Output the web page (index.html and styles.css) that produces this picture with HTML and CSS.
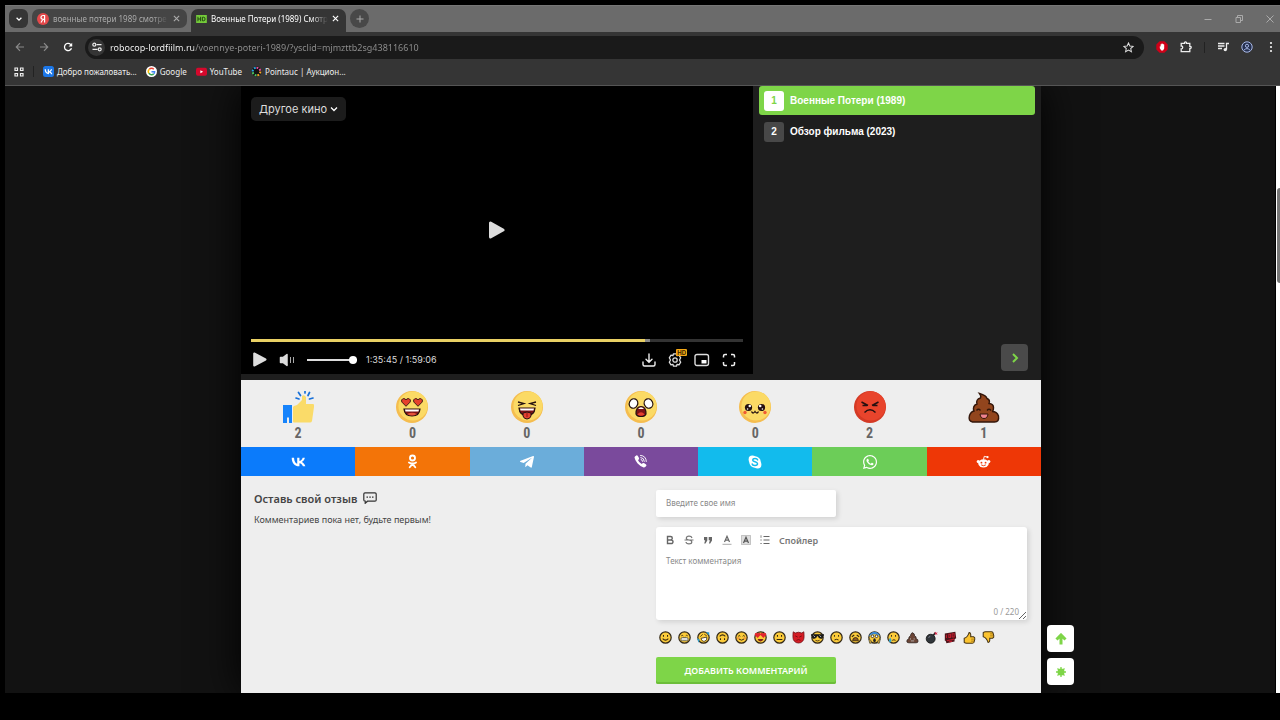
FILE: index.html
```html
<!DOCTYPE html>
<html lang="ru">
  <head>
    <meta charset="UTF-8" />
    <meta name="viewport" content="width=device-width, initial-scale=1.0" />
    <title>Военные Потери (1989) Смотреть</title>
    <link rel="stylesheet" href="styles.css">
  </head>
  <body>
    <svg class="sprite" aria-hidden="true">
      <symbol id="face" viewBox="0 0 32 32">
        <circle cx="16" cy="16" r="16" fill="#f5bd4f"/>
        <circle cx="17" cy="15" r="14.6" fill="#fbda65"/>
      </symbol>
      <symbol id="heart" viewBox="0 0 10 9">
        <path d="M5 8.3L1 4.2C-.2 2.6 1 .6 2.8.6 4 .6 4.700 1.300 5 2 5.300 1.300 6 .6 7.200.6 9 .6 10.200 2.600 9 4.200z" fill="#e6402c" stroke="#2a1512" stroke-width=".9"/>
      </symbol>
      <symbol id="mini" viewBox="0 0 16 16">
        <circle cx="8" cy="8" r="7" fill="#fbcb3a" stroke="#33291a" stroke-width="1.500"/>
      </symbol>
    </svg>

    <div class="browser">
      <div class="tabs">
        <button class="tab-search" aria-label="Поиск вкладок">
          <svg viewBox="0 0 10 10" width="8" height="8"><path d="M2 3.500l3 3 3-3" fill="none" stroke="#fff" stroke-width="1.600"/></svg>
        </button>
        <div class="tab">
          <svg viewBox="0 0 12 12" width="12" height="12"><circle cx="6" cy="6" r="6" fill="#e5484a"/><path d="M7.600 9.500v-7H6.300C4.800 2.500 4 3.300 4 4.500S4.700 6.300 6.300 6.300h1.300M6 6.300L4 9.500" fill="none" stroke="#fff" stroke-width="1.200"/></svg>
          <span class="tab-title">военные потери 1989 смотре</span>
          <button class="tab-close" aria-label="Закрыть"><svg viewBox="0 0 8 8" width="7" height="7"><path d="M1 1l6 6M7 1L1 7" stroke="currentColor" stroke-width="1.300"/></svg></button>
        </div>
        <div class="tab tab-active">
          <svg viewBox="0 0 12 9" width="11" height="8"><rect width="12" height="9" fill="#74cb3a"/><path d="M2 2v5M2 4.500h3M5 2v5M7 2.500v4h1.500q1.500 0 1.500-2t-1.500-2z" fill="none" stroke="#193b0b"/></svg>
          <span class="tab-title">Военные Потери (1989) Смотр</span>
          <button class="tab-close" aria-label="Закрыть"><svg viewBox="0 0 8 8" width="7" height="7"><path d="M1 1l6 6M7 1L1 7" stroke="currentColor" stroke-width="1.300"/></svg></button>
        </div>
        <button class="tab-new" aria-label="Новая вкладка">
          <svg viewBox="0 0 8 8" width="8" height="8"><path d="M4 .5v7M.5 4h7" stroke="#aaa"/></svg>
        </button>
        <div class="window-buttons">
          <button aria-label="Свернуть"><svg viewBox="0 0 8 8" width="8" height="8"><path d="M.5 4.500h7" stroke="#aaa"/></svg></button>
          <button aria-label="Развернуть"><svg viewBox="0 0 8 8" width="8" height="8"><path d="M1 2.500h4.500v5H1zM2.500 2.500v-2h5v5h-2" fill="none" stroke="#aaa"/></svg></button>
          <button aria-label="Закрыть окно"><svg viewBox="0 0 8 8" width="8" height="8"><path d="M.5.5l7 7M7.500.5l-7 7" stroke="#aaa"/></svg></button>
        </div>
      </div>

      <div class="toolbar">
        <div class="history">
          <button aria-label="Назад"><svg viewBox="0 0 10 10" width="10" height="10"><path d="M9 5H1.500M5 1.200L1.300 5 5 8.800" fill="none" stroke="#8a8a8a" stroke-width="1.200"/></svg></button>
          <button aria-label="Вперёд"><svg viewBox="0 0 10 10" width="10" height="10"><path d="M1 5h7.500M5 1.200L8.700 5 5 8.800" fill="none" stroke="#8a8a8a" stroke-width="1.200"/></svg></button>
          <button aria-label="Обновить"><svg viewBox="0 0 10 10" width="10" height="10"><path d="M8.500 6.200A3.600 3.600 0 1 1 7.600 2.400L8.800 3.600" fill="none" stroke="#fff" stroke-width="1.300"/><path d="M9.200.8v3.600H5.600z" fill="#fff"/></svg></button>
        </div>
        <div class="omnibox">
          <button class="site-info" aria-label="Сведения о сайте"><svg viewBox="0 0 10 10" width="10" height="10"><path d="M4.500 2.700h5M.5 7.300h5" stroke="#eee" stroke-width="1.200"/><circle cx="2.300" cy="2.700" r="1.500" fill="none" stroke="#eee" stroke-width="1.200"/><circle cx="7.700" cy="7.300" r="1.500" fill="none" stroke="#eee" stroke-width="1.200"/></svg></button>
          <input class="url" type="text" aria-label="Адресная строка" value="robocop-lordfiilm.ru/voennye-poteri-1989/?ysclid=mjmzttb2sg438116610">
          <button aria-label="В закладки"><svg viewBox="0 0 12 12" width="11" height="11"><path d="M6 1l1.500 3.300 3.600.4-2.700 2.400.8 3.500L6 8.800l-3.200 1.800.8-3.500L.9 4.700l3.600-.4z" fill="none" stroke="#ddd" stroke-width="1.100"/></svg></button>
        </div>
        <div class="extensions">
          <button aria-label="Блокировщик"><svg viewBox="0 0 12 12" width="12" height="12"><path d="M3.600.3h4.800l3.300 3.300v4.800l-3.300 3.300H3.600L.3 8.400V3.600z" fill="#d00018"/><path d="M3.800 5.200l.8.300V3.200h1V2.400h1v.5h.9V3.600h.7v3.900L7 9.500H5.300L3.800 7.200z" fill="#fff"/></svg></button>
          <button aria-label="Расширения"><svg viewBox="0 0 12 12" width="12" height="12"><path d="M1.200 2.400h3.300q-.2-1.500 1-1.500t1 1.500h3.300v3q1.400-.1 1.400 1t-1.400 1v3.200H1.200V7.900q1.500 0 1.500-1.500T1.200 5z" fill="none" stroke="#eee" stroke-width="1.300"/></svg></button>
          <i class="separator"></i>
          <button aria-label="Медиа"><svg viewBox="0 0 12 12" width="12" height="12"><path d="M1 2.500h6.500M1 5h6.500M1 7.500h4M9.500 8.500V2.500H12" fill="none" stroke="#eee" stroke-width="1.300"/><circle cx="8.300" cy="8.600" r="1.700" fill="#eee"/></svg></button>
          <button aria-label="Профиль"><svg viewBox="0 0 12 12" width="12" height="12"><circle cx="6" cy="6" r="5.200" fill="#263150" stroke="#a9b9e6"/><circle cx="6" cy="4.800" r="1.600" fill="none" stroke="#a9b9e6"/><path d="M2.800 9.300Q6 5.900 9.200 9.300" fill="none" stroke="#a9b9e6"/></svg></button>
          <button aria-label="Меню"><svg viewBox="0 0 12 12" width="12" height="12" fill="#eee"><circle cx="6" cy="2" r="1.100"/><circle cx="6" cy="6" r="1.100"/><circle cx="6" cy="10" r="1.100"/></svg></button>
        </div>
      </div>

      <nav class="bookmarks">
        <button aria-label="Сервисы"><svg viewBox="0 0 10 10" width="10" height="10"><path d="M1 1h2.500v2.500H1zM6.500 1H9v2.500H6.500zM1 6.500h2.500V9H1zM6.500 6.500H9V9H6.500z" fill="none" stroke="#eee" stroke-width="1.200"/></svg></button>
        <i class="separator"></i>
        <a href="#"><svg viewBox="0 0 22 22" width="11" height="11"><rect width="22" height="22" rx="5" fill="#1c77e8"/><path transform="translate(1.500 2.500) scale(.82)" d="M12.500 17C5.900 17 2.100 12.500 2 5h3.300c.1 5.500 2.500 7.800 4.400 8.300V5h3.100v4.700c1.900-.2 3.900-2.300 4.500-4.700h3.100c-.5 2.900-2.700 5-4.200 5.900 1.500.7 4 2.600 4.900 6.100h-3.400c-.7-2.300-2.600-4-4.900-4.300V17z" fill="#fff"/></svg>Добро пожаловать...</a>
        <a href="#"><svg viewBox="0 0 12 12" width="11" height="11"><circle cx="6" cy="6" r="6" fill="#fff"/><g fill="none" stroke-width="1.600"><path d="M3.600 3.500A3.400 3.400 0 0 1 8.500 3.500" stroke="#ea4335"/><path d="M3.100 7.800A3.400 3.400 0 0 1 3.600 3.500" stroke="#fbbc05"/><path d="M8.500 8.500A3.400 3.400 0 0 1 3.100 7.800" stroke="#34a853"/><path d="M6 6.200h3.400q0 1.500-.9 2.300" stroke="#4285f4"/></g></svg>Google</a>
        <a href="#"><svg viewBox="0 0 12 12" width="11" height="11"><rect y="2" width="12" height="8.500" rx="2" fill="#d5082c"/><path d="M4.800 4.500v3.500l3-1.750z" fill="#fff"/></svg>YouTube</a>
        <a href="#"><svg viewBox="0 0 12 12" width="11" height="11"><circle cx="6" cy="6" r="5.500" fill="#111"/><g fill="none" stroke-width="2.200" stroke-dasharray="2 1.500"><path d="M6 1.800A4.200 4.200 0 0 1 10.200 6" stroke="#e94f9d"/><path d="M10.200 6A4.200 4.200 0 0 1 6 10.200" stroke="#f5a524"/><path d="M6 10.200A4.200 4.200 0 0 1 1.800 6" stroke="#4cc763"/><path d="M1.800 6A4.200 4.200 0 0 1 6 1.800" stroke="#2ba9e8"/></g></svg>Pointauc | Аукцион...</a>
      </nav>

      <div class="viewport">
        <div class="scroller">
          <main class="site">
            <section class="player">
              <div class="video">
                <button class="other">Другое кино
                  <svg viewBox="0 0 8 8" width="8" height="8"><path d="M1 2.500l3 3 3-3" fill="none" stroke="#fff" stroke-width="1.300"/></svg>
                </button>
                <button class="big-play" aria-label="Смотреть"><svg viewBox="0 0 16 18" width="16" height="18"><path d="M1.500 2v14L14 9z" fill="#ddd" stroke="#ddd" stroke-width="3" stroke-linejoin="round"/></svg></button>
                <div class="controls">
                  <input class="seek" type="range" min="0" max="7146" value="5745" aria-label="Перемотка">
                  <div class="control-row">
                    <button aria-label="Играть"><svg viewBox="0 0 14 15" width="14" height="15"><path d="M1.200 1.500v12L12.500 7.500z" fill="#ddd" stroke="#ddd" stroke-width="2" stroke-linejoin="round"/></svg></button>
                    <button aria-label="Звук"><svg viewBox="0 0 16 14" width="16" height="14"><path d="M1.500 4.500H4L8 1.500v11L4 9.500H1.500z" fill="#ddd" stroke="#ddd" stroke-width="1.500" stroke-linejoin="round"/><path d="M11.500 4v6M14.500 4v6" stroke="#aaa"/></svg></button>
                    <input class="volume" type="range" min="0" max="100" value="100" aria-label="Громкость">
                    <span class="time">1:35:45 / 1:59:06</span>
                    <div class="control-right">
                      <button aria-label="Скачать"><svg viewBox="0 0 14 14" width="14" height="14" fill="none" stroke="#eee" stroke-width="1.400" stroke-linecap="round"><path d="M7 1v8M4 6.300l3 3 3-3M1 9v2.500q0 1.500 1.500 1.500h9q1.500 0 1.500-1.500V9"/></svg></button>
                      <button class="settings" aria-label="Настройки"><svg viewBox="0 0 14 14" width="14" height="14" fill="none" stroke="#ddd" stroke-width="1.300" stroke-linejoin="round"><path d="M5.500.8h3l.6 1.900 1.900-.5 1.700 2.600L11.500 7l1.200 2.200-1.700 2.600-1.900-.5-.6 1.900h-3l-.6-1.900-1.900.5-1.700-2.600L2.500 7 1.300 4.800 3 2.200l1.900.5z"/><circle cx="7" cy="7" r="2.200"/></svg><span class="hd">HD</span></button>
                      <button aria-label="Мини-плеер"><svg viewBox="0 0 16 14" width="16" height="14"><rect x="1" y="1.500" width="13.500" height="11" rx="2" fill="none" stroke="#ddd" stroke-width="1.400"/><rect x="7.500" y="7" width="5" height="3.500" fill="#fff"/></svg></button>
                      <button aria-label="Во весь экран"><svg viewBox="0 0 14 14" width="14" height="14"><path d="M1.500 4.500V3q0-1.500 1.500-1.500h2M9 1.500h2q1.500 0 1.500 1.500v1.500M12.500 9v2q0 1.500-1.500 1.500H9M5 12.500H3Q1.500 12.500 1.500 11V9" fill="none" stroke="#eee" stroke-width="1.500"/></svg></button>
                    </div>
                  </div>
                </div>
              </div>
              <aside class="playlist">
                <button class="episode episode-active"><b>1</b>Военные Потери (1989)</button>
                <button class="episode"><b>2</b>Обзор фильма (2023)</button>
                <button class="next" aria-label="Далее"><svg viewBox="0 0 10 12" width="10" height="12"><path d="M3 2l4 4-4 4" fill="none" stroke="#7ed548" stroke-width="2"/></svg></button>
              </aside>
            </section>

            <section class="reactions">
              <button class="reaction">
                <svg viewBox="0 0 32 32" width="32" height="32"><path d="M1 14h9v18H7v-5l-1-1-1 1v5H1z" fill="#1683fb"/><path d="M12 15l3-1 5-5V5q2-2 4 1v7h7q1.500 0 1 3l-2 14q-.5 1.500-2 1.500H12q-1 0-1-1V16z" fill="#fadb69"/><path d="M14 7l3 1M16.500 1.500l2 3M23 0v2M27.500 1.500l-1.500 3M31 7l-3.500 1" stroke="#1870d8" stroke-width="1.700" stroke-linecap="round"/></svg>
                <span>2</span>
              </button>
              <button class="reaction">
                <svg viewBox="0 0 32 32" width="32" height="32"><use href="#face"/><use href="#heart" x="5" y="7" width="10" height="9"/><use href="#heart" x="17" y="7" width="10" height="9"/><path d="M8 18h16q-.5 7-8 7t-8-7z" fill="#7c1216" stroke="#241010" stroke-width="1.200"/><path d="M9 18.600h14l-.5 2H9.500z" fill="#fff"/><path d="M11 23q5-2.500 10 0-5 3-10 0z" fill="#e5533b"/></svg>
                <span>0</span>
              </button>
              <button class="reaction">
                <svg viewBox="0 0 32 32" width="32" height="32"><use href="#face"/><path d="M7 11l6 1.500L7 14.500M25 11l-6 1.500 6 2" fill="none" stroke="#241010" stroke-width="1.300"/><path d="M8 17h16q-.5 7.500-8 7.500T8 17z" fill="#7c1216" stroke="#241010" stroke-width="1.200"/><path d="M9 17.600h14l-.5 2H9.500z" fill="#fff"/><path d="M12 22q4-2 8 0v3q-1 3-4 3t-4-3z" fill="#e5402f" stroke="#241010"/><path d="M16 22v4" stroke="#8c1717"/></svg>
                <span>0</span>
              </button>
              <button class="reaction">
                <svg viewBox="0 0 32 32" width="32" height="32"><use href="#face"/><ellipse cx="8.500" cy="12.500" rx="4.200" ry="4.800" transform="rotate(25 8.500 12.500)" fill="#fff" stroke="#241010" stroke-width="1.200"/><ellipse cx="23.500" cy="12.500" rx="4.200" ry="4.800" transform="rotate(-25 23.500 12.500)" fill="#fff" stroke="#241010" stroke-width="1.200"/><path d="M11 23q0-7.500 5-7.500t5 7.500q-1 2.500-5 2.500T11 23z" fill="#7c1216" stroke="#241010" stroke-width="1.200"/><path d="M13 18q3-3.500 6 0z" fill="#fff"/><path d="M12.300 23.500q3.700-4.500 7.400 0-3.700 2.500-7.400 0z" fill="#e5402f"/></svg>
                <span>0</span>
              </button>
              <button class="reaction">
                <svg viewBox="0 0 32 32" width="32" height="32"><use href="#face"/><circle cx="9.500" cy="16.500" r="3.600" fill="#241010"/><circle cx="22.500" cy="16.500" r="3.600" fill="#241010"/><circle cx="10.800" cy="15" r="1.300" fill="#fff"/><circle cx="21.200" cy="15" r="1.300" fill="#fff"/><circle cx="8.600" cy="18" r=".8" fill="#fff"/><circle cx="23.400" cy="18" r=".8" fill="#fff"/><circle cx="6" cy="21.500" r="1.700" fill="#ef5b34"/><circle cx="26" cy="21.500" r="1.700" fill="#ef5b34"/><path d="M12.500 20.500q1.500 3 3.500 0 2 3 3.500 0" fill="none" stroke="#241010" stroke-width="1.300"/></svg>
                <span>0</span>
              </button>
              <button class="reaction">
                <svg viewBox="0 0 32 32" width="32" height="32"><circle cx="16" cy="16" r="16" fill="#d43a25"/><circle cx="17" cy="15" r="14.600" fill="#e8442c"/><path d="M7.500 11l6.500 3.500M24.500 11L18 14.500M8.500 14.500h4.500M19 14.500h4.500M10.500 21.500q5.500-5.500 11 0" fill="none" stroke="#241010" stroke-width="1.500"/></svg>
                <span>2</span>
              </button>
              <button class="reaction">
                <svg viewBox="0 0 32 32" width="32" height="32"><path d="M11.500 2.500q7 2 7.500 5 3.500 1.500 2 5 4.500.5 4.500 4t-1.500 4q5 0 6.500 4.500 1 6-4 6h-22Q0 30 1.500 24.500 3 20.500 6 20q-2-5 3-7-1.500-4.500 3.500-6 1-2-1-4.500z" fill="#92451d" stroke="#33160a" stroke-width="1.400"/><path d="M8.500 19.500q2-2.500 4 0M19 19.500q2-2.500 4 0" fill="none" stroke="#33160a" stroke-width="1.300"/><path d="M12 23h8q-.5 4.500-4 4.500T12 23z" fill="#ee8390" stroke="#33160a"/></svg>
                <span>1</span>
              </button>
            </section>

            <section class="share">
              <a href="#" class="vk" aria-label="ВКонтакте"><svg viewBox="1 3 21 16" width="15" height="12"><path d="M12.500 17C5.900 17 2.100 12.500 2 5h3.300c.1 5.500 2.500 7.800 4.400 8.300V5h3.100v4.700c1.900-.2 3.900-2.300 4.500-4.700h3.100c-.5 2.900-2.700 5-4.200 5.900 1.500.7 4 2.600 4.900 6.100h-3.400c-.7-2.300-2.600-4-4.900-4.300V17z" fill="#fff"/></svg></a>
              <a href="#" class="ok" aria-label="Одноклассники"><svg viewBox="0 0 14 16" width="13" height="15" fill="none" stroke="#fff" stroke-width="2" stroke-linecap="round"><circle cx="7" cy="4.200" r="2.700"/><path d="M3.200 9q3.800 2.400 7.600 0M7 10.500l-3 3.700M7 10.500l3 3.700"/></svg></a>
              <a href="#" class="tg" aria-label="Telegram"><svg viewBox="0 0 448 512" width="14" height="16"><path d="M446.700 98.600l-67.600 318.800c-5.100 22.500-18.400 28.100-37.300 17.500l-103-75.900-49.700 47.800c-5.500 5.500-10.100 10.100-20.700 10.100l7.400-104.900 190.900-172.500c8.300-7.400-1.800-11.500-12.900-4.100L117.800 284 16.200 252.200c-22.100-6.900-22.500-22.100 4.600-32.700L418.200 66.400c18.400-6.900 34.500 4.100 28.500 32.200z" fill="#fff"/></svg></a>
              <a href="#" class="viber" aria-label="Viber"><svg viewBox="0 0 16 16" width="15" height="15"><path d="M3.500 1.500q1-.5 2 1.200T6.500 5Q6.500 5.800 5.300 6.500q1 3 4 4.200 1-1.400 2-1.200 1 .3 2.600 1.600.8.700.3 1.500-1.300 2-2.800 1.700Q7.500 13 4.700 9.800 2 6.500 1.600 3.800q0-1.300 1.900-2.300z" fill="#fff"/><path d="M8 1.500q6 .3 6.200 6.500M8.300 3.700q3.700.4 3.800 4.200M8.600 5.800q1.500.2 1.600 2" fill="none" stroke="#fff" stroke-linecap="round"/></svg></a>
              <a href="#" class="skype" aria-label="Skype"><svg viewBox="0 0 16 16" width="14" height="14"><circle cx="5" cy="5" r="4.300" fill="#fff"/><circle cx="11" cy="11" r="4.300" fill="#fff"/><circle cx="8" cy="8" r="6.600" fill="#fff"/><path d="M11 5.600Q10.500 4 8 4T5.300 5.800q0 1.500 2.700 2t2.900 2.200Q10.900 12 8 12t-3.200-1.800" fill="none" stroke="#12bbed" stroke-width="1.700" stroke-linecap="round"/></svg></a>
              <a href="#" class="wa" aria-label="WhatsApp"><svg viewBox="0 0 448 512" width="14" height="16"><path d="M380.900 97.100C339 55.100 283.200 32 223.900 32c-122.400 0-222 99.600-222 222 0 39.100 10.200 77.300 29.600 111L0 480l117.700-30.900c32.400 17.700 68.900 27 106.100 27h.1c122.300 0 224.100-99.600 224.100-222 0-59.300-25.200-115-67.100-157zm-157 341.600c-33.200 0-65.700-8.900-94-25.700l-6.700-4-69.800 18.300L72 359.200l-4.400-7c-18.500-29.400-28.200-63.300-28.200-98.200 0-101.700 82.800-184.500 184.600-184.500 49.300 0 95.600 19.200 130.400 54.100 34.800 34.900 56.200 81.200 56.100 130.500 0 101.800-84.900 184.600-186.600 184.600zm101.200-138.200c-5.500-2.800-32.800-16.200-37.900-18-5.100-1.900-8.800-2.800-12.500 2.800-3.700 5.600-14.300 18-17.600 21.800-3.200 3.700-6.500 4.200-12 1.400-32.600-16.300-54-29.100-75.500-66-5.700-9.800 5.700-9.100 16.300-30.300 1.800-3.700.9-6.900-.5-9.700-1.400-2.800-12.500-30.100-17.100-41.200-4.500-10.800-9.100-9.300-12.500-9.500-3.200-.2-6.900-.2-10.600-.2-3.700 0-9.700 1.400-14.800 6.900-5.100 5.600-19.400 19-19.400 46.300 0 27.300 19.900 53.700 22.600 57.400 2.800 3.700 39.100 59.700 94.800 83.800 35.200 15.200 49 16.500 66.600 13.900 10.700-1.600 32.800-13.400 37.400-26.400 4.600-13 4.600-24.100 3.200-26.400-1.300-2.500-5-3.900-10.500-6.600z" fill="#fff"/></svg></a>
              <a href="#" class="reddit" aria-label="Reddit"><svg viewBox="0 0 16 16" width="15" height="15"><ellipse cx="8" cy="10" rx="5.600" ry="4.300" fill="#fff"/><circle cx="2.300" cy="8" r="1.600" fill="#fff"/><circle cx="13.700" cy="8" r="1.600" fill="#fff"/><path d="M8 6l.8-3.500 3 .7" fill="none" stroke="#fff"/><circle cx="12.300" cy="3.200" r="1.200" fill="#fff"/><circle cx="5.800" cy="9.200" r="1" fill="#f03a0a"/><circle cx="10.200" cy="9.200" r="1" fill="#f03a0a"/><path d="M5.500 11.600q2.500 1.800 5 0" fill="none" stroke="#f03a0a"/></svg></a>
            </section>

            <section class="comments">
              <div>
                <h2>Оставь свой отзыв
                  <svg viewBox="0 0 14 12" width="14" height="12"><path d="M2 .8h10q1.200 0 1.200 1.200v6q0 1.200-1.200 1.200H4.500L2.200 11.300V9.200Q.8 9.200.8 8V2Q.8.8 2 .8z" fill="none" stroke="#333" stroke-width="1.200"/><path d="M3.500 4.500H5v1.200H3.500zM6.300 4.500h1.500v1.200H6.300zM9 4.500h1.500v1.200H9z" fill="#333"/></svg>
                </h2>
                <p>Комментариев пока нет, будьте первым!</p>
              </div>
              <form class="comment-form">
                <input class="name" type="text" placeholder="Введите свое имя" aria-label="Имя">
                <div class="editor">
                  <div class="format">
                    <button type="button" aria-label="Жирный"><svg viewBox="0 0 10 10" width="10" height="10"><path d="M2.500 1.500h3q1.800 0 1.800 1.700T5.500 5h-3zM2.500 5H6q2 0 2 1.800T6 8.500H2.500z" fill="none" stroke="#666" stroke-width="1.400"/></svg></button>
                    <button type="button" aria-label="Зачёркнутый"><svg viewBox="0 0 10 10" width="10" height="10"><path d="M8 3Q7.500 1.200 5 1.200T2.300 3.200Q2.300 4.600 5 5T7.800 7Q7.800 8.900 5 8.900T2 7M.5 5h9" fill="none" stroke="#777" stroke-width="1.200"/></svg></button>
                    <button type="button" aria-label="Цитата"><svg viewBox="0 0 10 10" width="10" height="10"><path d="M1 2h3.300v3.500L2.500 8.500H1.200L2.200 5.300H1zM5.700 2H9v3.500L7.200 8.500H5.900L6.900 5.300H5.700z" fill="#666"/></svg></button>
                    <button type="button" aria-label="Цвет текста"><svg viewBox="0 0 10 10" width="10" height="10"><path d="M2.500 7L5 1.300 7.500 7M3.400 5.200h3.200" fill="none" stroke="#666" stroke-width="1.200"/><path d="M.5 9.300h9" stroke="#aaa"/></svg></button>
                    <button type="button" aria-label="Цвет фона"><svg viewBox="0 0 10 10" width="10" height="10"><rect x=".5" y=".5" width="9" height="9" fill="#ddd" stroke="#999" stroke-dasharray="1 1"/><path d="M2.500 8L5 2.300 7.500 8M3.400 6.200h3.200" fill="none" stroke="#555" stroke-width="1.200"/></svg></button>
                    <button type="button" aria-label="Список"><svg viewBox="0 0 10 10" width="10" height="10"><path d="M3.500 1.500h6M3.500 5h6M3.500 8.500h6" stroke="#666" stroke-width="1.200"/><path d="M1 .3v2.500M.3 5h1.500M.3 8.500h1.500" stroke="#888"/></svg></button>
                    <button type="button" class="spoiler">Спойлер</button>
                  </div>
                  <textarea placeholder="Текст комментария" aria-label="Текст комментария" maxlength="220"></textarea>
                  <span class="counter">0 / 220</span>
                </div>
                <div class="smiles">
                  <button type="button" aria-label="Улыбка"><svg viewBox="0 0 16 16" width="13" height="13"><use href="#mini"/><path d="M5.500 5v2M10.500 5v2M4.500 9.500q3.500 3.500 7 0" fill="none" stroke="#332510" stroke-width="1.300"/></svg></button>
                  <button type="button" aria-label="Смех"><svg viewBox="0 0 16 16" width="13" height="13"><use href="#mini"/><path d="M4 6q1-1.500 2.500 0M9.500 6q1-1.500 2.500 0" fill="none" stroke="#332510"/><rect x="3.500" y="8" width="9" height="4" rx="2" fill="#ddd" stroke="#554"/></svg></button>
                  <button type="button" aria-label="Хохот"><svg viewBox="0 0 16 16" width="13" height="13"><use href="#mini"/><path d="M4 7l3-3M9 4l3 2" stroke="#332510"/><path d="M5 9l7-1.500q1 4-2.500 5T5 9z" fill="#fff" stroke="#332510"/><path d="M0 9l3.500 1.500L2 14.500zM11 1.500l4 0 0 4z" fill="#2e9cca"/></svg></button>
                  <button type="button" aria-label="Вверх ногами"><svg viewBox="0 0 16 16" width="13" height="13"><use href="#mini"/><path d="M5.500 11V9M10.500 11V9M4.500 6.500q3.500-3.500 7 0" fill="none" stroke="#332510" stroke-width="1.300"/></svg></button>
                  <button type="button" aria-label="Румянец"><svg viewBox="0 0 16 16" width="13" height="13"><use href="#mini"/><circle cx="4" cy="9" r="1.500" fill="#f29a3c"/><circle cx="12" cy="9" r="1.500" fill="#f29a3c"/><path d="M4 6.500q1.200-1.800 2.500 0M9.500 6.500q1.200-1.800 2.500 0M5 10q3 2.500 6 0" fill="none" stroke="#332510" stroke-width="1.200"/></svg></button>
                  <button type="button" aria-label="Влюблён"><svg viewBox="0 0 16 16" width="13" height="13"><use href="#mini"/><path d="M4.500 8.500L1 5q-.5-3 2-3l1.500 1.200L6 2q2.500 0 2 3zM11.500 8.500L8 5q-.5-3 2-3l1.500 1.200L13 2q2.500 0 2 3z" fill="#e4252e"/><path d="M4.500 9.800h7q-.5 3-3.500 3t-3.500-3z" fill="#7a241b"/></svg></button>
                  <button type="button" aria-label="Нейтрально"><svg viewBox="0 0 16 16" width="13" height="13"><use href="#mini"/><path d="M5.500 5v2M10.500 5v2M4.500 10.500h7" fill="none" stroke="#332510" stroke-width="1.300"/></svg></button>
                  <button type="button" aria-label="Злость"><svg viewBox="0 0 16 16" width="13" height="13"><path d="M1.500 1l2.500 1.500q4-2 8 0L14.500 1q.5 3 .3 7a6.800 6.800 0 0 1-13.600 0Q1 4 1.500 1z" fill="#d51c24" stroke="#71151b"/><path d="M4 6l3 1.500M12 6L9 7.500M5.500 11.500q2.500-2 5 0" fill="none" stroke="#7a0f14" stroke-width="1.200"/></svg></button>
                  <button type="button" aria-label="Круто"><svg viewBox="0 0 16 16" width="13" height="13"><use href="#mini"/><path d="M0 4h16v1.500l-1 .5q0 3.500-3 3.500T8.500 6.500h-1Q7 9.500 4 9.500T1 6L0 5.500z" fill="#191919"/><path d="M3 5.500l2 2M10.500 5.500l2 2" stroke="#ddd"/><path d="M5.500 11.500q2.500 1.500 5 0" fill="none" stroke="#332510"/></svg></button>
                  <button type="button" aria-label="Грусть"><svg viewBox="0 0 16 16" width="13" height="13"><use href="#mini"/><path d="M5.500 5v2M10.500 5v2M5.500 11q2.500-1.500 5 0" fill="none" stroke="#332510" stroke-width="1.200"/></svg></button>
                  <button type="button" aria-label="Усталость"><svg viewBox="0 0 16 16" width="13" height="13"><use href="#mini"/><path d="M3.500 7l3-2M12.500 7l-3-2" stroke="#332510" stroke-width="1.300"/><path d="M4.500 12q0-4 3.500-4t3.500 4z" fill="#8b5a24" stroke="#332510"/></svg></button>
                  <button type="button" aria-label="Ужас"><svg viewBox="0 0 16 16" width="13" height="13"><use href="#mini"/><path d="M1 8a7 7 0 0 1 14 0Q14 4 8 4T1 8z" fill="#3b8bd5"/><circle cx="5.500" cy="6.500" r="1.600" fill="#fff" stroke="#222"/><circle cx="10.500" cy="6.500" r="1.600" fill="#fff" stroke="#222"/><ellipse cx="8" cy="11.500" rx="1.600" ry="2.500" fill="#222"/><path d="M1 10q3 0 3 5H2zM15 10q-3 0-3 5h2z" fill="#f5b92f" stroke="#554"/></svg></button>
                  <button type="button" aria-label="Слеза"><svg viewBox="0 0 16 16" width="13" height="13"><use href="#mini"/><path d="M5.500 5v2M10.500 5v2M6.500 11.500q2-1.500 4 0" fill="none" stroke="#332510" stroke-width="1.200"/><path d="M4 8q3 5 0 6-3.500-1 0-6z" fill="#35a7cf"/></svg></button>
                  <button type="button" aria-label="Какашка"><svg viewBox="0 0 16 16" width="13" height="13"><path d="M7.500 2q3.500 1 3 4 2.500.5 2 3.500 2.500.5 2.300 3 0 2-2.300 2h-9Q1 14.500 1 12.500T3.500 9.500Q3 7 5.500 6 5.500 4 7.500 2z" fill="#6b4536" stroke="#2d211d"/><path d="M5.500 9v1.500M10 9v1.500M6 12.200h4" stroke="#bbb"/></svg></button>
                  <button type="button" aria-label="Бомба"><svg viewBox="0 0 16 16" width="13" height="13"><circle cx="7" cy="9.500" r="5.500" fill="#30353a" stroke="#111"/><path d="M10 5.500l3-3.500" stroke="#222" stroke-width="2"/><path d="M13 .5l.7 1.500 2-.3L14.500 3l1 1.500-2-.5-1 1V3L11 2l1.800-.2z" fill="#d9284b"/><path d="M4.500 8.500q.5-2 2-2" fill="none" stroke="#889"/></svg></button>
                  <button type="button" aria-label="Сто"><svg viewBox="0 0 16 16" width="13" height="13"><path d="M1 3l13-2 1 8-2 1v3l-10 2-1-3H1z" fill="#4b1419"/><path d="M3 4.500v4M6 4h2v4H6zM10 3.300h2.500v4H10zM3.500 12l9-2M6 13.500l4-1" fill="none" stroke="#bf1b2d" stroke-width="1.300"/></svg></button>
                  <button type="button" aria-label="Нравится"><svg viewBox="0 0 16 16" width="13" height="13"><path d="M1.500 9q4-1 6-7 2.500 0 2 5h3.500q2 1 1.500 3l-1 4q-.5 1-2 1h-7q-2 0-3-1z" fill="#fbc32f" stroke="#453313" stroke-width="1.300"/><path d="M10 10h4M10 12.500h3.500" stroke="#9d7016"/></svg></button>
                  <button type="button" aria-label="Не нравится"><svg viewBox="0 0 16 16" width="13" height="13"><path d="M1.500 7q4 1 6 7 2.500 0 2-5h3.500q2-1 1.500-3l-1-4q-.5-1-2-1h-7q-2 0-3 1z" fill="#fbc32f" stroke="#453313" stroke-width="1.300"/><path d="M10 6h4M10 3.500h3.500" stroke="#9d7016"/></svg></button>
                </div>
                <button type="submit" class="submit">ДОБАВИТЬ КОММЕНТАРИЙ</button>
              </form>
            </section>
          </main>

          <div class="floating">
            <button aria-label="Наверх"><svg viewBox="0 0 12 12" width="12" height="12"><path d="M6 11.500V3M1.500 6.500L6 2l4.500 4.500" fill="none" stroke="#7ed548" stroke-width="3"/></svg></button>
            <button aria-label="Тема"><svg viewBox="0 0 12 12" width="12" height="12"><circle cx="6" cy="6" r="3.500" fill="#7ed548"/><path d="M6 1v10M1 6h10M2.500 2.500l7 7M9.500 2.500l-7 7" stroke="#7ed548" stroke-width="1.300"/></svg></button>
          </div>
        </div>
        <div class="scrollbar"><div class="thumb"></div></div>
      </div>
    </div>
  </body>
</html>
```

FILE: styles.css
```css
* {
  box-sizing: border-box;
}

body {
  display: flex;
  min-height: 100vh;
  margin: 0;
  padding: 5px 0 27px 5px;
  background: #000;
  font-family: 'Noto Sans', 'Open Sans', sans-serif;
  font-size: 9px;
  color: #444;
}

button {
  display: flex;
  align-items: center;
  justify-content: center;
  padding: 0;
  border: 0;
  background: none;
  color: inherit;
  font: inherit;
  cursor: pointer;
}

input,
textarea {
  margin: 0;
  border: 0;
  font: inherit;
  outline: none;
}

a {
  color: inherit;
  text-decoration: none;
}

svg {
  display: block;
  flex-shrink: 0;
}

.sprite {
  position: absolute;
  width: 0;
  height: 0;
}

/* browser */

.browser {
  display: flex;
  flex: 1;
  flex-direction: column;
  min-width: 0;
  overflow: hidden;
  font-size: 8px;
}

.tabs {
  display: flex;
  gap: 4px;
  height: 27px;
  padding: 3px 0 0 4px;
  border-top: 1px solid #777;
  background: #6b6b6b;
}

.tab-search {
  width: 19px;
  height: 19px;
  border-radius: 6px;
  background: #353535;
}

.tab {
  display: flex;
  align-items: center;
  gap: 4px;
  width: 155px;
  height: 19px;
  padding: 0 7px 0 5px;
  border-radius: 7px;
  background: #454545;
  color: #aaa;
}

.tab-active {
  height: 23px;
  padding-bottom: 4px;
  border-radius: 7px 7px 0 0;
  background: #353535;
  color: #fff;
}

.tab-title {
  flex: 1;
  white-space: nowrap;
  mask-image: linear-gradient(to right, #000 85%, transparent);
}

.tab-new {
  width: 19px;
  height: 19px;
  border-radius: 50%;
  background: #484848;
}

.window-buttons {
  display: flex;
  gap: 23px;
  margin-left: auto;
  padding: 0 6px 4px 0;
}

.toolbar {
  display: flex;
  align-items: center;
  gap: 12px;
  height: 30px;
  padding: 0 3px 0 10px;
  background: #353535;
}

.history {
  display: flex;
  gap: 14px;
}

.omnibox {
  display: flex;
  flex: 1;
  align-items: center;
  gap: 5px;
  height: 23px;
  padding: 0 10px 0 3px;
  border-radius: 12px;
  background: #1a1a1a;
}

.site-info {
  width: 17px;
  height: 17px;
  border-radius: 50%;
  background: #353535;
}

/* host part is brighter than the rest of the address */
.url {
  flex: 1;
  padding: 0;
  background: linear-gradient(to right, #fff 84px, #919191 84px);
  background-clip: text;
  color: transparent;
  font-size: 9px;
}

.extensions {
  display: flex;
  align-items: center;
  gap: 12px;
}

.separator {
  width: 1px;
  height: 11px;
  background: #222;
}

.bookmarks {
  display: flex;
  align-items: center;
  gap: 9px;
  height: 24px;
  padding: 0 9px 4px;
  border-bottom: 1px solid #555;
  background: #353535;
  color: #eee;
}

.bookmarks a {
  display: flex;
  align-items: center;
  gap: 3px;
}

.viewport {
  display: flex;
  flex: 1;
  background: #121212;
}

.scroller {
  position: relative;
  display: flex;
  flex: 1;
  justify-content: center;
  padding-left: 2px;
  overflow: hidden;
}

.scrollbar {
  width: 5px;
  padding-top: 102px;
  border-left: 1px solid #000;
  background: #fff;
}

.thumb {
  height: 95px;
  margin-left: 1px;
  border-radius: 3px 0 0 3px;
  background: #777;
}

/* site */

.site {
  display: flex;
  flex-direction: column;
  width: 100%;
  max-width: 800px;
  background: #eee;
  box-shadow: 0 0 40px #000;
  font-size: 9px;
}

.player {
  display: grid;
  grid-template-columns: 64% 36%;
  padding-bottom: 6px;
  background: #1e1e1e;
}

.video {
  position: relative;
  display: flex;
  flex-direction: column;
  justify-content: space-between;
  aspect-ratio: 16 / 9;
  padding: 11px 10px 1px;
  background: #000;
  color: #ddd;
  font-family: Inter, sans-serif;
}

.other {
  align-self: flex-start;
  gap: 3px;
  height: 24px;
  padding: 0 8px;
  border-radius: 5px;
  background: #1c1c1c;
  font-size: 11px;
}

.big-play {
  position: absolute;
  top: 50%;
  left: 50%;
  transform: translate(-50%, -50%);
}

.seek,
.volume {
  appearance: none;
  display: block;
}

.seek {
  width: 100%;
  height: 3px;
  background: linear-gradient(to right, #e9d064 80%, #888 80%, #888 81%, #333 81%);
}

.seek::-webkit-slider-thumb {
  appearance: none;
  width: 2px;
  height: 2px;
}

.volume {
  width: 50px;
  height: 8px;
  background: linear-gradient(#ddd, #ddd) center / 100% 2px no-repeat;
}

.volume::-webkit-slider-thumb {
  appearance: none;
  width: 8px;
  height: 8px;
  border-radius: 50%;
  background: #fff;
}

.control-row {
  display: flex;
  align-items: center;
  height: 27px;
  gap: 12px;
  margin-top: 4px;
  padding: 0 7px 0 2px;
}

.time {
  margin-left: -3px;
}

.control-right {
  display: flex;
  gap: 12px;
  margin-left: auto;
}

.settings {
  position: relative;
}

.hd {
  position: absolute;
  top: -4px;
  right: -5px;
  padding: 0 1px;
  border-radius: 1px;
  background: #f5a916;
  color: #3b2500;
  font-size: 6px;
  font-weight: bold;
  line-height: 7px;
}

.playlist {
  display: flex;
  flex-direction: column;
  gap: 2px;
  padding: 0 6px 3px;
}

.episode {
  justify-content: flex-start;
  gap: 6px;
  height: 29px;
  padding: 0 5px;
  border-radius: 3px;
  color: #fff;
  font: bold 10px 'Liberation Sans', sans-serif;
}

.episode b {
  width: 20px;
  border-radius: 3px;
  background: #484848;
  line-height: 20px;
}

.episode-active {
  background: #7ed548;
}

.episode-active b {
  background: #fff;
  color: #7ed548;
}

.next {
  align-self: flex-end;
  width: 27px;
  height: 27px;
  margin: auto 7px 0 0;
  border-radius: 4px;
  background: #4a4a4a;
}

.reactions {
  display: grid;
  grid-template-columns: repeat(7, 1fr);
  height: 67px;
  padding-top: 11px;
}

.reaction {
  flex-direction: column;
  justify-content: flex-start;
  gap: 2px;
  color: #666;
  font: bold 14px 'Roboto Condensed', 'Liberation Sans Narrow', Roboto, sans-serif;
}

.share {
  display: grid;
  grid-template-columns: repeat(7, 1fr);
}

.share a {
  display: flex;
  align-items: center;
  justify-content: center;
  height: 29px;
}

.vk {
  background: #0b7bfb;
}

.ok {
  background: #f37408;
}

.tg {
  background: #6badda;
}

.viber {
  background: #7a4a9c;
}

.skype {
  background: #12bbed;
}

.wa {
  background: #6ccd58;
}

.reddit {
  background: #ee3706;
}

.comments {
  display: grid;
  flex: 1;
  grid-template-columns: 1fr 371px;
  padding: 14px 14px 9px 13px;
}

h2 {
  display: flex;
  align-items: center;
  gap: 6px;
  height: 16px;
  margin: 0 0 6px;
  font-size: 11px;
  font-weight: 600;
}

p {
  margin: 0;
  line-height: 16px;
}

.comment-form {
  display: flex;
  flex-direction: column;
  align-items: flex-start;
  gap: 10px;
}

.name {
  width: 180px;
  height: 27px;
  padding: 0 10px 2px;
  border-radius: 2px;
  box-shadow: 2px 2px 5px rgba(0, 0, 0, 0.12);
  font-size: 8px;
}

.editor {
  position: relative;
  width: 100%;
  border-radius: 3px;
  background: #fff;
  box-shadow: 2px 2px 5px rgba(0, 0, 0, 0.12);
}

.format {
  display: flex;
  align-items: center;
  gap: 9px;
  height: 26px;
  padding: 0 9px;
}

.spoiler {
  color: #777;
  font-weight: 600;
}

textarea {
  display: block;
  width: 100%;
  height: 67px;
  padding: 2px 10px;
  background: none;
  resize: vertical;
  font-size: 8px;
}

::placeholder {
  color: #888;
}

.counter {
  position: absolute;
  right: 8px;
  bottom: 3px;
  color: #999;
  font-size: 8px;
}

.smiles {
  display: flex;
  gap: 6px;
  padding: 1px 3px 0;
}

.submit {
  width: 180px;
  height: 27px;
  margin-top: 3px;
  border-radius: 2px;
  box-shadow: inset 0 -2px #6cbd3a;
  background: #7ed548;
  color: #fff;
  font-weight: 600;
}

.floating {
  position: absolute;
  bottom: 8px;
  left: calc(50% + 407px);
  display: grid;
  gap: 6px;
}

.floating button {
  width: 27px;
  height: 27px;
  border-radius: 4px;
  background: #fff;
}
```
